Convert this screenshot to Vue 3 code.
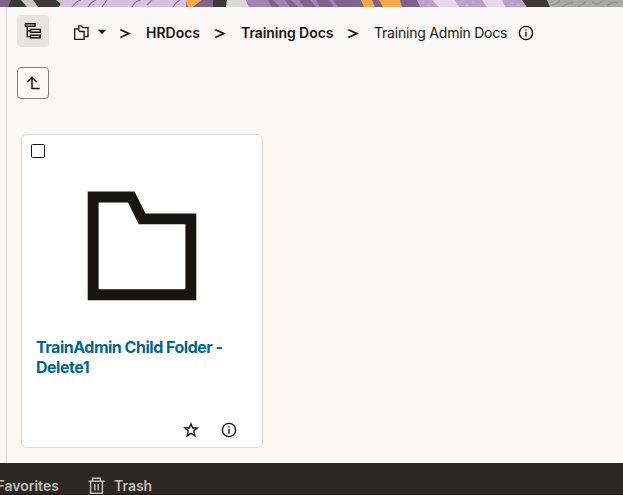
<script setup>
const crumbs = [
  { label: 'HRDocs', cls: 'hr' },
  { label: 'Training Docs', cls: 'training' },
]
</script>

<template>
  <div class="page">
    <svg class="banner" width="623" height="7" viewBox="0 0 623 7">
      <rect width="623" height="7" fill="#80628c" />
      <path d="M11 0H63L59 7H8Z" fill="#3d3b36" />
      <path d="M21 0H33L38 7H27ZM56 0H63L61 4Z" fill="#cdc9c2" />
      <path d="M63 0H187L186 7H59Z" fill="#d6c1df" />
      <path d="M72 7Q76 1 81 0M88 7Q91 2 96 0M102 7L107 0M132 7Q135 1 141 0M147 5L152 0M173 7Q176 2 180 0" fill="none" stroke="#8d6f9d" stroke-width="1.2" />
      <path d="M186 0H202L193 7H188ZM361 0H372L375 7H364ZM379 0H400L402 7H383Z" fill="#f3a947" />
      <path d="M202 0H213V7H193Z" fill="#80628c" />
      <path d="M213 0H227L226 7H213Z" fill="#3d3b36" />
      <path d="M227 0H246L249 7H226Z" fill="#dcd9d4" />
      <path d="M246 0H268L272 7H249ZM273 0H285L290 7H280ZM291 0H299L304 7H298ZM310 0H316L320 7H316ZM329 0H333L338 7H334Z" fill="#a184b4" />
      <path d="M417 0H523L527 7H420Z" fill="#baa0cb" />
      <path d="M432 0H455L459 7H439ZM482 0H502L505 7H487Z" fill="#e7d7e9" />
      <path d="M422 2H424M427 5H430M460 2H463M466 5H468M472 2H475M510 3H513M517 5H520" stroke="#cdb9da" />
      <path d="M522 0H547L550 7H527Z" fill="#3d3b36" />
      <path d="M547 0H623V7H550Z" fill="#aba7a1" />
      <path d="M552 5Q558 4 560 0M562 7Q568 2 573 3M578 6Q583 5 586 1M592 2Q598 6 602 1M607 6Q612 1 618 3" fill="none" stroke="#918d88" stroke-width="1.1" />
    </svg>
    <main class="body">
      <div class="toolbar">
        <button class="tree" aria-label="Tree view">
          <svg width="18" height="18" viewBox="0 0 18 18" fill="none" stroke="#161513" stroke-width="1.4">
            <path d="M1.4 1.7H11V4.3H1.4ZM3.3 4.3V14.6H6.5M3.3 8.8H6.5M6.5 7.4H16.3V10.2H6.5ZM6.5 13.2H16.3V15.7H6.5Z" />
          </svg>
        </button>
        <button class="folders" aria-label="Folders">
          <svg width="16" height="16" viewBox="0 0 16 16" fill="none" stroke="#161513" stroke-width="1.3">
            <path d="M5.7 5.1L4.6 3.9H1.7V14.3H11.1V6.5H6.7L5.7 5.1V.9H8.3L9.8 2.7H15V11.6H11.1" />
          </svg>
        </button>
        <svg class="caret" width="10" height="6" viewBox="0 0 10 6"><path d="M.8.7H9.2L5 5.1Z" fill="#161513" /></svg>
        <nav class="crumbs">
          <template v-for="crumb in crumbs" :key="crumb.label">
            <svg class="chevron" width="12" height="12" viewBox="0 0 12 12"><path d="M.3 1.7L8.9 5.6L.3 9.5" fill="none" stroke="#161513" stroke-width="1.7" /></svg>
            <b :class="crumb.cls">{{ crumb.label }}</b>
          </template>
          <svg class="chevron" width="12" height="12" viewBox="0 0 12 12"><path d="M.3 1.7L8.9 5.6L.3 9.5" fill="none" stroke="#161513" stroke-width="1.7" /></svg>
          <span class="current">Training Admin Docs</span>
        </nav>
        <svg class="info" width="16" height="16" viewBox="0 0 16 16" fill="none" stroke="#161513">
          <circle cx="8" cy="8" r="6.6" stroke-width="1.4" /><path d="M8 6.7V11.7M8 4.2V5.6" stroke-width="1.4" />
        </svg>
      </div>
      <button class="up" aria-label="Up one level">
        <svg width="16" height="16" viewBox="0 0 16 16" fill="none" stroke="#161513" stroke-width="1.5">
          <path d="M2.2 7L7 2.2L11.8 7M7 2.5V13.4H14.8" />
        </svg>
      </button>
      <article class="card">
        <span class="check" role="checkbox" aria-checked="false"></span>
        <svg class="folder" width="110" height="110" viewBox="0 0 110 110">
          <path d="M.7.6H47.5L58.5 22.6H109.3V109.2H.7ZM11.6 11.5V98.3H98.4V33.3H51.7L41 11.5Z" fill="#161513" fill-rule="evenodd" />
        </svg>
        <h2>TrainAdmin Child Folder -<br />Delete1</h2>
        <div class="actions">
          <svg width="16" height="16" viewBox="0 0 16 16" fill="none" stroke="#161513" stroke-width="1.4">
            <path d="M8 1.9L9.7 6H14.1L10.8 9L11.9 13.7L8 11.3L4.1 13.7L5.2 9L1.9 6H6.3Z" />
          </svg>
          <svg width="16" height="16" viewBox="0 0 16 16" fill="none" stroke="#161513">
            <circle cx="8" cy="8" r="6.6" stroke-width="1.4" /><path d="M8 6.7V11.7M8 4.2V5.6" stroke-width="1.4" />
          </svg>
        </div>
      </article>
    </main>
    <footer class="footer">
      <span class="favorites">Favorites</span>
      <svg width="18" height="18" viewBox="0 0 18 18" fill="none" stroke="#c1bfbc" stroke-width="1.5">
        <path d="M.5 4.2H16.5M4.7 4V1.2H12.3V4M2.6 4.2V16.2H14.4V4.2M6.8 7V13.5M10.2 7V13.5" />
      </svg>
      <span class="trash">Trash</span>
    </footer>
  </div>
</template>

<style>
body { margin: 0; overflow: hidden; background: #f9f8f6; }
</style>

<style scoped>
* { box-sizing: border-box; }
svg { display: block; flex: none; }
.page { width: 623px; height: 495px; overflow: hidden; background: #f9f8f6; color: #161513; font-family: Inter, "Liberation Sans", sans-serif; }
.body { height: 456px; margin-left: 6px; padding: 8px 0 0 10px; border-left: 1px solid #dad8d5; }
.toolbar { display: flex; align-items: center; height: 32px; }
button { display: grid; place-items: center; padding: 0; border: 0; background: none; }
.tree { width: 32px; height: 32px; border-radius: 4px; background: #e6e3e1; }
.folders { margin: 3px 0 0 24px; }
.caret { margin: 2px 0 0 8px; }
.crumbs { display: flex; align-items: center; margin: 4px 11px 0 0; font-size: 14px; line-height: 20px; white-space: nowrap; }
.crumbs b { font-weight: 600; }
.chevron { margin: 2px 0 0 13px; }
.hr { width: 55px; margin: 0 1px 0 14px; }
.training { width: 93px; margin: 0 1px 0 14px; letter-spacing: -.06px; }
.current { width: 133px; margin-left: 14px; letter-spacing: -.21px; }
.info { margin-top: 3px; }
.up { width: 32px; height: 32px; margin-top: 20px; border: 1px solid #817f7c; border-radius: 4px; background: #fbfaf8; }
.card { display: flex; flex-direction: column; width: 242px; height: 314px; margin: 35px 0 0 4px; padding: 9px 14px 9px; border: 1px solid #dfdddb; border-radius: 6px; background: #fff; }
.check { width: 14px; height: 14px; margin-left: -5px; border: 1.5px solid #161513; border-radius: 1.5px; }
.folder { margin: 33px 0 0 51px; }
h2 { margin: 36px 0 0; font-size: 16px; line-height: 20px; font-weight: 700; color: #00688c; letter-spacing: -.49px; white-space: nowrap; }
.actions { display: flex; gap: 22px; margin: auto 11px 0 auto; }
.footer { display: flex; align-items: flex-start; height: 32px; padding-top: 14px; background: #2c2723; border-bottom: 1px solid #24191a; color: #c1bfbc; font-size: 14px; line-height: 18px; font-weight: 600; }
.favorites { width: 63px; margin-left: -3.5px; }
.footer svg { margin-left: 28.5px; }
.trash { margin-left: 8px; }
</style>
